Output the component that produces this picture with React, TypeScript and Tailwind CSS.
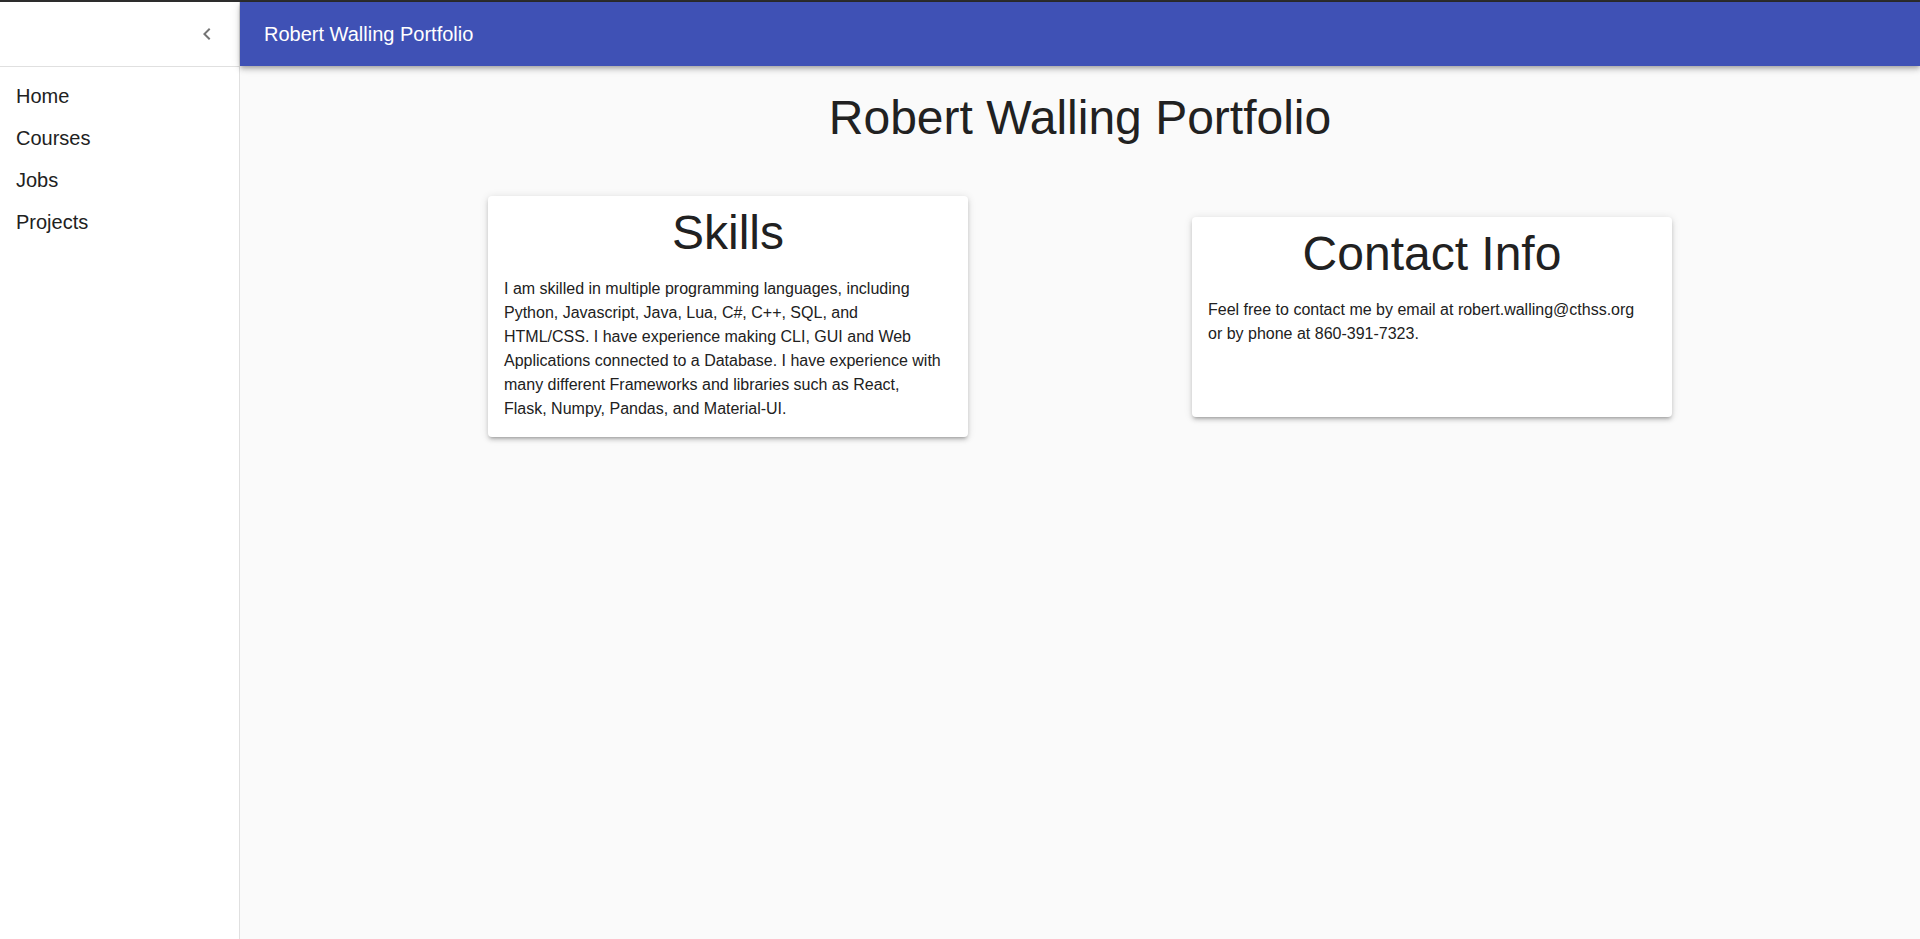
import React from 'react';

const font = { fontFamily: '"Liberation Sans", Arial, Helvetica, sans-serif' };

const navItems = ['Home', 'Courses', 'Jobs', 'Projects'];

const ChevronLeft = () => (
  <svg width="24" height="24" viewBox="0 0 24 24" fill="#757575">
    <path d="M15.41 7.41 14 6l-6 6 6 6 1.41-1.41L10.83 12z" />
  </svg>
);

const Sidebar = () => (
  <div className="w-[240px] shrink-0 h-full bg-white border-r border-[#e0e0e0] flex flex-col">
    <div className="h-[64px] flex items-center justify-end px-2 border-b border-[#e0e0e0] box-content">
      <button className="w-12 h-12 flex items-center justify-center rounded-full">
        <ChevronLeft />
      </button>
    </div>
    <ul className="pt-2">
      {navItems.map((item) => (
        <li
          key={item}
          className="px-4 py-2 text-[20px] leading-[26px] text-[#212121] cursor-pointer"
        >
          {item}
        </li>
      ))}
    </ul>
  </div>
);

const Card = ({
  title,
  children,
  className,
}: {
  title: string;
  children: React.ReactNode;
  className?: string;
}) => (
  <div
    className={
      'w-[480px] bg-white rounded pt-[9px] px-4 pb-4 shadow-[0px_3px_3px_-2px_rgba(0,0,0,0.2),0px_3px_4px_0px_rgba(0,0,0,0.14),0px_1px_8px_0px_rgba(0,0,0,0.12)] ' +
      (className ?? '')
    }
  >
    <h3 className="text-[48px] leading-[56px] text-center text-[#212121] mb-4">{title}</h3>
    <p className="text-[16px] leading-[24px] text-[#212121]">{children}</p>
  </div>
);

export default function App() {
  return (
    <div className="h-[939px] w-full flex flex-col overflow-hidden bg-[#fafafa]" style={font}>
      <div className="h-[2px] bg-[#2d2d2d] shrink-0" />
      <div className="flex flex-1 min-h-0">
        <Sidebar />
        <div className="flex-1 flex flex-col">
          <header className="h-[64px] shrink-0 bg-[#3f51b5] flex items-center px-6 shadow-[0px_2px_4px_-1px_rgba(0,0,0,0.2),0px_4px_5px_0px_rgba(0,0,0,0.14),0px_1px_10px_0px_rgba(0,0,0,0.12)] z-10">
            <h6 className="text-[20px] leading-[32px] text-white">Robert Walling Portfolio</h6>
          </header>
          <main className="flex-1 pt-6">
            <h1 className="text-[48px] leading-[56px] text-center text-[#212121]">
              Robert Walling Portfolio
            </h1>
            <div className="mt-[50px] flex justify-center items-center gap-[224px]">
              <Card title="Skills">
                I am skilled in multiple programming languages, including
                <br />
                Python, Javascript, Java, Lua, C#, C++, SQL, and
                <br />
                HTML/CSS. I have experience making CLI, GUI and Web
                <br />
                Applications connected to a Database. I have experience with
                <br />
                many different Frameworks and libraries such as React,
                <br />
                Flask, Numpy, Pandas, and Material-UI.
              </Card>
              <Card title="Contact Info" className="h-[200px]">
                Feel free to contact me by email at robert.walling@cthss.org
                <br />
                or by phone at 860-391-7323.
              </Card>
            </div>
          </main>
        </div>
      </div>
    </div>
  );
}
